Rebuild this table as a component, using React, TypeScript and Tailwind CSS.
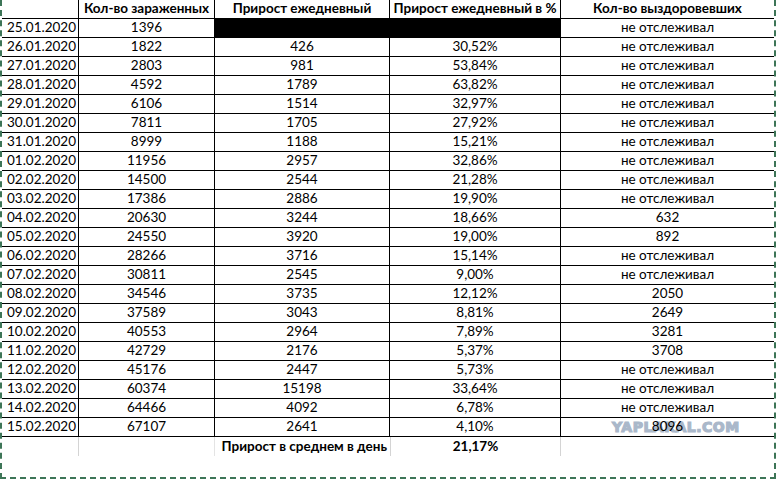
const rows: [string, string, string, string, string][] = [
  ["25.01.2020", "1396", "", "", "не отслеживал"],
  ["26.01.2020", "1822", "426", "30,52%", "не отслеживал"],
  ["27.01.2020", "2803", "981", "53,84%", "не отслеживал"],
  ["28.01.2020", "4592", "1789", "63,82%", "не отслеживал"],
  ["29.01.2020", "6106", "1514", "32,97%", "не отслеживал"],
  ["30.01.2020", "7811", "1705", "27,92%", "не отслеживал"],
  ["31.01.2020", "8999", "1188", "15,21%", "не отслеживал"],
  ["01.02.2020", "11956", "2957", "32,86%", "не отслеживал"],
  ["02.02.2020", "14500", "2544", "21,28%", "не отслеживал"],
  ["03.02.2020", "17386", "2886", "19,90%", "не отслеживал"],
  ["04.02.2020", "20630", "3244", "18,66%", "632"],
  ["05.02.2020", "24550", "3920", "19,00%", "892"],
  ["06.02.2020", "28266", "3716", "15,14%", "не отслеживал"],
  ["07.02.2020", "30811", "2545", "9,00%", "не отслеживал"],
  ["08.02.2020", "34546", "3735", "12,12%", "2050"],
  ["09.02.2020", "37589", "3043", "8,81%", "2649"],
  ["10.02.2020", "40553", "2964", "7,89%", "3281"],
  ["11.02.2020", "42729", "2176", "5,37%", "3708"],
  ["12.02.2020", "45176", "2447", "5,73%", "не отслеживал"],
  ["13.02.2020", "60374", "15198", "33,64%", "не отслеживал"],
  ["14.02.2020", "64466", "4092", "6,78%", "не отслеживал"],
  ["15.02.2020", "67107", "2641", "4,10%", "8096"],
];

const grid = "grid grid-cols-[77px_136px_175px_171px_1fr]";
const cell = "flex h-[19px] items-center justify-center border-r border-b border-black";

export default function App() {
  return (
    <div className="h-[480px] w-[776px] overflow-hidden bg-white font-['Lato','Open_Sans',sans-serif] text-[13.5px] leading-none text-black">
      <div className="relative h-[479px] border-r-2 border-b-2 border-l-2 border-dashed border-[#3d7557]">
        <div className={`${grid} font-bold`}>
          <div className={cell}></div>
          <div className={cell}>Кол-во зараженных</div>
          <div className={cell}>Прирост ежедневный</div>
          <div className={cell}>Прирост ежедневный в %</div>
          <div className={`${cell} border-r-0`}>Кол-во выздоровевших</div>
        </div>
        {rows.map((r, i) => (
          <div key={r[0]} className={grid}>
            <div className={`${cell} justify-start pl-[5px]`}>{r[0]}</div>
            <div className={cell}>{r[1]}</div>
            {i === 0 ? (
              <div className={`${cell} col-span-2 bg-black`}></div>
            ) : (
              <>
                <div className={cell}>{r[2]}</div>
                <div className={cell}>{r[3]}</div>
              </>
            )}
            <div className={`${cell} relative border-r-0`}>
              {i === rows.length - 1 && (
                <span className="absolute top-[2px] left-[51px] font-['DejaVu_Sans',sans-serif] text-[14px] font-bold tracking-[0.5px] text-[#aab8ca] [-webkit-text-stroke:1.2px_#aab8ca]">
                  YAPLAKAL.COM
                </span>
              )}
              <span className="relative">{r[4]}</span>
            </div>
          </div>
        ))}
        <div className={`${grid} font-bold`}>
          <div className="h-[19px] border-r border-[#d4d4d4]"></div>
          <div className="h-[19px] border-r border-[#e4e4e4]"></div>
          <div className="flex h-[19px] items-center justify-end pr-[3px]">Прирост в среднем в день</div>
          <div className="flex h-[19px] items-center justify-center border-r border-l border-[#d4d4d4]">21,17%</div>
          <div className="h-[19px]"></div>
        </div>
      </div>
    </div>
  );
}
